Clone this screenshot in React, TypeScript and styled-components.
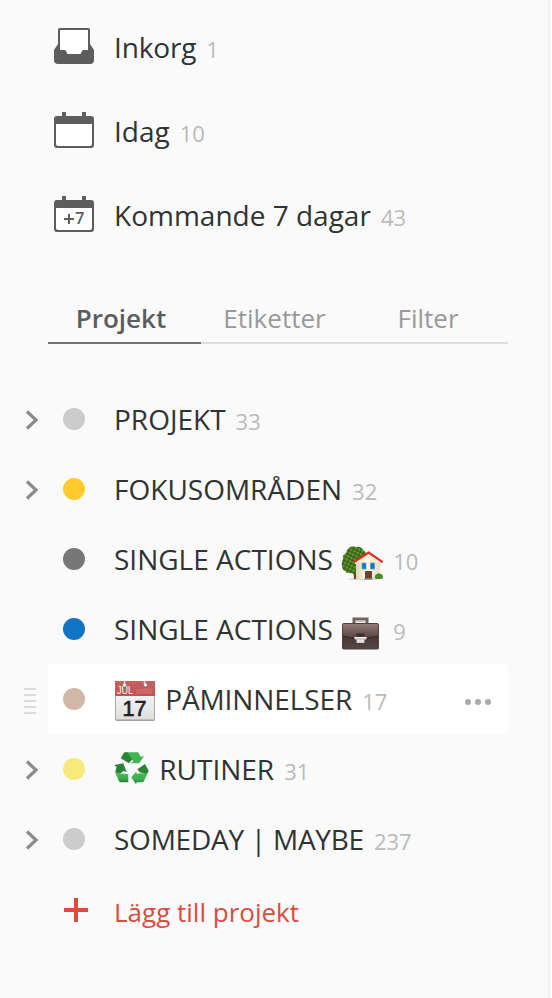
import React from "react";
import styled, { createGlobalStyle } from "styled-components";

const GlobalStyle = createGlobalStyle`
  * { box-sizing: border-box; }
  body { margin: 0; background: #fff; font-family: "Open Sans", "Noto Sans", sans-serif; }
  svg { display: block; flex: none; overflow: visible; }
`;

const Sidebar = styled.aside`
  width: 550px;
  height: 998px;
  padding: 5px 40px 0 0;
  background: #fafafa;
  border-right: 2px solid #f1f1f1;
  overflow: hidden;
`;

const NavItem = styled.a`
  display: flex;
  align-items: center;
  height: 84px;
  padding-left: 54px;
  color: #2f3432;
`;

const NavIcon = styled.span`
  width: 60px;
  height: 38px;
`;

const Label = styled.span`
  display: flex;
  align-items: baseline;
  font-size: 28px;
  line-height: 38px;
  white-space: pre;
`;

const LabelText = styled.span<{ $tracking?: number }>`
  letter-spacing: ${(p) => p.$tracking ?? 0}px;
`;

const Count = styled.span`
  margin-left: 10px;
  font-size: 22px;
  line-height: 30px;
  color: #bababa;
`;

const Tabs = styled.div`
  display: grid;
  grid-template-columns: 153px 154px 153px;
  width: 460px;
  height: 50px;
  margin: 37px 0 40px 48px;
`;

const Tab = styled.button<{ $active?: boolean }>`
  padding: 0 7px 0 0;
  border: 0;
  border-bottom: 2px solid ${(p) => (p.$active ? "#707070" : "#dedede")};
  background: none;
  font: ${(p) => (p.$active ? 600 : 400)} 26px/48px "Open Sans", sans-serif;
  color: ${(p) => (p.$active ? "#5c5c5c" : "#999")};
`;

const ProjectRow = styled.div`
  display: flex;
  height: 70px;
`;

const Gutter = styled.div`
  width: 48px;
  flex: none;
  padding: 27px 0 0 24px;
`;

const ProjectBody = styled.div<{ $hovered?: boolean }>`
  display: flex;
  align-items: center;
  flex: none;
  width: 460px;
  padding: 0 16px 0 15px;
  border-radius: 5px;
  color: #2f3432;
  background: ${(p) => (p.$hovered ? "#fff" : "transparent")};
`;

const Dot = styled.span<{ $color: string }>`
  width: 22px;
  height: 22px;
  margin: 0 29px 1px 0;
  border-radius: 50%;
  background: ${(p) => p.$color};
`;

const EmojiBox = styled.span<{ $width: number }>`
  width: ${(p) => p.$width}px;
  height: 38px;
  align-self: center;
`;

const MoreButton = styled.span`
  margin: 5px 0 0 auto;
`;

const AddProject = styled.div`
  display: flex;
  align-items: center;
  height: 70px;
  margin-top: 3px;
  padding-left: 64px;
  color: #db4c3f;
  font-size: 26px;
  line-height: 36px;
`;

const AddIcon = styled.span`
  width: 50px;
  padding-bottom: 5px;
`;

const InboxIcon = () => (
  <svg width="40" height="36" viewBox="0 0 40 36">
    <path fill="#5d5d5d" d="M6 0h28q2 0 2 2v14l4 6v10q0 4-4 4H4q-4 0-4-4V22l4-6V2q0-2 2-2Z" />
    <path fill="#fff" d="M6 2h28v20h-4.500q-1 0-1.500 1l-1.500 3h-13L12 23q-.5-1-1.500-1H6Z" />
  </svg>
);

const CalendarIcon = ({ week }: { week?: boolean }) => (
  <svg width="40" height="36" viewBox="0 0 40 36">
    <path fill="#5d5d5d" d="M8 0h4v4h16V0h4v4h5q3 0 3 3v26q0 3-3 3H3q-3 0-3-3V7q0-3 3-3h5Z" />
    <path fill="#fff" d="M2 12h36v20q0 2-2 2H4q-2 0-2-2Z" />
    {week && (
      <>
        <path d="M10 23h10M15 18v10" stroke="#5d5d5d" strokeWidth="2" />
        <text x="21" y="28" fontFamily="Open Sans" fontSize="16.500" fontWeight="600" fill="#5d5d5d">7</text>
      </>
    )}
  </svg>
);

const Chevron = () => (
  <svg width="16" height="18" viewBox="0 0 16 18">
    <path d="M3 .5l9 8.500L3 17.500" fill="none" stroke="#8b8b8b" strokeWidth="3.200" />
  </svg>
);

const DragHandle = () => (
  <svg width="12" height="26" viewBox="0 0 12 26" transform="translate(0 -3)">
    <path d="M0 1h12M0 7h12M0 13h12M0 19h12M0 25h12" stroke="#dcdcdc" strokeWidth="2" />
  </svg>
);

const House = () => (
  <svg width="42" height="38" viewBox="-1 -4 42 38">
    <defs>
      <pattern id="leaves" width="3.600" height="3.600" patternUnits="userSpaceOnUse" patternTransform="rotate(25)">
        <rect width="3.600" height="3.600" fill="#47741f" />
        <circle cx="1" cy="1" r=".9" fill="#79a640" />
        <circle cx="2.800" cy="2.700" r=".8" fill="#2b5412" />
      </pattern>
      <linearGradient id="wall" x2="1"><stop stopColor="#ddd6b6" /><stop offset=".4" stopColor="#fbf8e5" /><stop offset="1" stopColor="#e6dfc4" /></linearGradient>
    </defs>
    <ellipse cx="23" cy="35" rx="16" ry="1" fill="#bbb" opacity=".55" />
    <path d="M12 24h4v11h-3Z" fill="#6c4625" />
    <path d="M8 4q3-3 7-1 5-1 7 3 4 2 3 6l-8 8v9q-4 2-7 0-4 1-6-2-3-1-3-5-1-4 1-7-1-4 3-6 0-3 3-5Z" fill="url(#leaves)" />
    <path d="M15 18l12.700-9L39 18v17H15Z" fill="url(#wall)" />
    <path d="M14 19.500L27.700 11 40.500 19.500" fill="none" stroke="#f7efdc" strokeWidth="2" />
    <path d="M12.700 18.200L27.700 8.500l14 9.700" fill="none" stroke="#e52920" strokeWidth="2.200" />
    <path d="M21 19h4v6h-4ZM29.500 19h4v6h-4Z" fill="#087bd0" stroke="#589ac2" strokeWidth=".7" />
    <path d="M24.500 27.500h6V35h-6Z" fill="#714029" stroke="#52301e" strokeWidth=".8" />
    <path d="M23 35h9" stroke="#a29789" strokeWidth="1.300" />
    <path d="M34 34.500q-1-4 3-5 5-.5 5 4l-1 1.500h-6Z" fill="#438d2c" />
  </svg>
);

const Briefcase = () => (
  <svg width="42" height="38" viewBox="1 -6 42 38">
    <defs>
      <linearGradient id="leather" x2="0" y2="1"><stop stopColor="#957d79" /><stop offset=".5" stopColor="#5b4a47" /><stop offset=".55" stopColor="#463936" /><stop offset="1" stopColor="#554744" /></linearGradient>
    </defs>
    <path d="M15 7V3h13v4" fill="none" stroke="#75615d" strokeWidth="3" />
    <path d="M17 5.500h9" stroke="#ccc7c4" strokeWidth="1.500" />
    <rect x="3.500" y="7.500" width="36" height="25.500" rx="1" fill="url(#leather)" stroke="#51413d" />
    <path d="M4 20q9 3 17.500 3T39 20" fill="none" stroke="#342b29" strokeWidth="1.300" />
    <path d="M17.500 17.500h8v3h-8Z" fill="#382e2c" />
    <path d="M15.500 21h12v2.500h-2V27h-8v-3.500h-2Z" fill="#d1cdca" />
    <path d="M15.500 21.500h12M18 25h7" stroke="#f5f3f1" strokeWidth="1.200" />
  </svg>
);

const CalendarEmoji = () => (
  <svg width="42" height="42" viewBox="0 0 42 42">
    <defs>
      <linearGradient id="page" x2="0" y2="1"><stop stopColor="#fff" /><stop offset="1" stopColor="#dedede" /></linearGradient>
      <linearGradient id="red" x2="0" y2="1"><stop stopColor="#c56161" /><stop offset="1" stopColor="#c94e50" /></linearGradient>
    </defs>
    <rect x="1.500" y="1.500" width="39" height="39" rx="1" fill="url(#page)" stroke="#aaa" />
    <path d="M1 1h40v15H1Z" fill="url(#red)" />
    <path d="M2 40h38" stroke="#999" />
    <g fill="#fff" stroke="#75605e" strokeWidth=".7"><circle cx="10.500" cy="5" r="2" /><circle cx="31.500" cy="5" r="2" /></g>
    <path d="M10.500 0v4M30.500 0v4" stroke="#ddd" strokeWidth="1.500" />
    <path d="M23 9v5M25 9v5M27 9v5M29 8v6M31 8v6M33 8v6M35 8v6M37 9v5" stroke="#dc8d8b" strokeWidth=".6" />
    <text x="3" y="14" fontFamily="Liberation Sans" fontSize="10" fill="#fff" textLength="16" lengthAdjust="spacingAndGlyphs">JUL</text>
    <text x="8.500" y="35.500" fontFamily="Liberation Sans" fontSize="22.500" fill="#202020" stroke="#202020" strokeWidth=".7" textLength="24" lengthAdjust="spacingAndGlyphs">17</text>
  </svg>
);

const Recycle = () => (
  <svg width="36" height="38" viewBox="0 0 36 38">
    <defs>
      <linearGradient id="fold" x2="0" y2="1"><stop stopColor="#48bd5b" /><stop offset=".6" stopColor="#3dac4e" /><stop offset="1" stopColor="#238037" /></linearGradient>
    </defs>
    <path fill="#42b455" d="M12 2.300h12.300l2.400 4.400L30 6l-4.700 7.300h-8.600l2.600-2Z" />
    <path fill="#2b8239" d="M6.700 8.300l3.600-6h3l5 7-3.300 4Z" />
    <path fill="url(#fold)" d="M1 22l5 1.500 8.300.5v8.300H6.500q-1.200 0-2-2Z" />
    <path fill="#2b8239" d="M.3 15l9-1.700 3.400 9-2.700-1.300-4 2.500-4.700-1.200 1.200-5.300Z" />
    <path fill="url(#fold)" d="M17.300 27.300L22 21.700l.7 2 11-1L30 31q-.5 1.300-2 1.300h-5.300l-.7 2Z" />
    <path fill="#2b8239" d="M23.300 19.300L31 14l3.700 6.700-1.500 2.800-7.200-1Z" />
  </svg>
);

const DotsIcon = () => (
  <svg width="28" height="6" viewBox="0 0 28 6" fill="#aaa">
    <circle cx="4" cy="3" r="3" /><circle cx="14" cy="3" r="3" /><circle cx="24" cy="3" r="3" />
  </svg>
);

const navigation = [
  { name: "Inkorg", count: 1, icon: <InboxIcon />, tracking: -0.15 },
  { name: "Idag", count: 10, icon: <CalendarIcon /> },
  { name: "Kommande 7 dagar", count: 43, icon: <CalendarIcon week /> },
];

type Project = {
  name: string;
  count: number;
  color: string;
  expandable?: boolean;
  hovered?: boolean;
  before?: React.ReactNode;
  beforeWidth?: number;
  after?: React.ReactNode;
  tracking?: number;
};

const projects: Project[] = [
  { name: "PROJEKT", count: 33, color: "#ccc", expandable: true },
  { name: "FOKUSOMRÅDEN", count: 32, color: "#fecb2e", expandable: true },
  { name: "SINGLE ACTIONS ", count: 10, color: "#777", after: <House /> },
  { name: "SINGLE ACTIONS ", count: 9, color: "#1274c5", after: <Briefcase /> },
  { name: " PÅMINNELSER", count: 17, color: "#d1b7a5", hovered: true, before: <CalendarEmoji />, beforeWidth: 44, tracking: -0.1 },
  { name: " RUTINER", count: 31, color: "#f7e97b", expandable: true, before: <Recycle />, beforeWidth: 38 },
  { name: "SOMEDAY | MAYBE", count: 237, color: "#ccc", expandable: true, tracking: -0.25 },
];

export default function App() {
  return (
    <>
      <GlobalStyle />
      <Sidebar>
        <nav>
          {navigation.map((item) => (
            <NavItem key={item.name}>
              <NavIcon>{item.icon}</NavIcon>
              <Label>
                <LabelText $tracking={item.tracking}>{item.name}</LabelText>
                <Count>{item.count}</Count>
              </Label>
            </NavItem>
          ))}
        </nav>
        <Tabs>
          <Tab $active>Projekt</Tab>
          <Tab>Etiketter</Tab>
          <Tab>Filter</Tab>
        </Tabs>
        {projects.map((project, index) => (
          <ProjectRow key={index}>
            <Gutter>
              {project.expandable && <Chevron />}
              {project.hovered && <DragHandle />}
            </Gutter>
            <ProjectBody $hovered={project.hovered}>
              <Dot $color={project.color} />
              <Label>
                {project.before && <EmojiBox $width={project.beforeWidth ?? 42}>{project.before}</EmojiBox>}
                <LabelText $tracking={project.tracking}>{project.name}</LabelText>
                {project.after && <EmojiBox $width={43}>{project.after}</EmojiBox>}
                <Count>{project.count}</Count>
              </Label>
              {project.hovered && <MoreButton><DotsIcon /></MoreButton>}
            </ProjectBody>
          </ProjectRow>
        ))}
        <AddProject>
          <AddIcon>
            <svg width="24" height="24" viewBox="0 0 24 24">
              <path d="M12 0v24M0 12h24" stroke="#db4c3f" strokeWidth="4" />
            </svg>
          </AddIcon>
          Lägg till projekt
        </AddProject>
      </Sidebar>
    </>
  );
}
